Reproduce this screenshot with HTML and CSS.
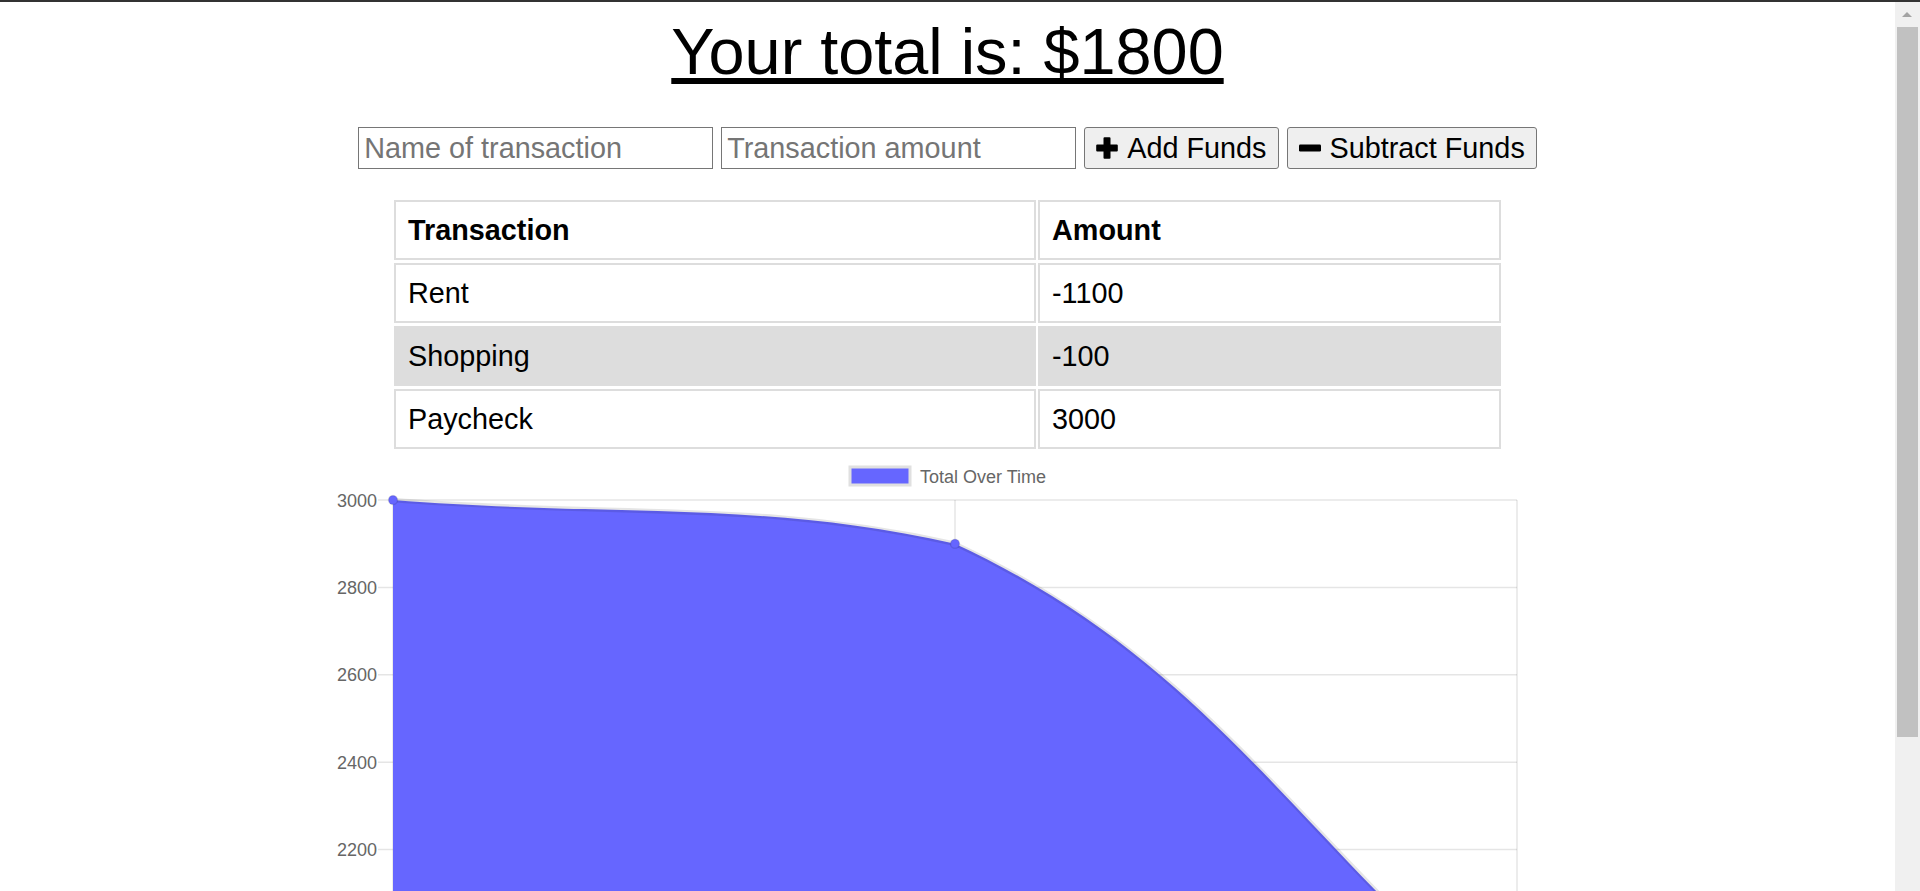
FILE: index.html
```html
<!DOCTYPE html>
<html lang="en">
<head>
<meta charset="utf-8">
<title>Budget Tracker</title>
<link rel="stylesheet" href="styles.css">
</head>
<body>
<div class="window-edge"></div>
<main class="page">
  <h1 class="total">Your total is: $1800</h1>

  <form class="entry">
    <input class="field" type="text" placeholder="Name of transaction">
    <input class="field" type="text" placeholder="Transaction amount">
    <button type="button" class="btn">
      <svg class="btn-icon" viewBox="0 0 22 22" aria-hidden="true"><path d="M7.5 1.2a1 1 0 0 1 1-1h5a1 1 0 0 1 1 1v6.3h6.3a1 1 0 0 1 1 1v5a1 1 0 0 1-1 1h-6.3v6.3a1 1 0 0 1-1 1h-5a1 1 0 0 1-1-1v-6.3H1.2a1 1 0 0 1-1-1v-5a1 1 0 0 1 1-1h6.3z" fill="#000"/></svg>
      <span>Add Funds</span>
    </button>
    <button type="button" class="btn">
      <svg class="btn-icon" viewBox="0 0 22 22" aria-hidden="true"><rect x="0" y="7.5" width="22" height="7" rx="1.2" fill="#000"/></svg>
      <span>Subtract Funds</span>
    </button>
  </form>

  <table class="ledger">
    <colgroup><col class="c-name"><col class="c-amount"></colgroup>
    <thead>
      <tr><th>Transaction</th><th>Amount</th></tr>
    </thead>
    <tbody>
      <tr><td>Rent</td><td>-1100</td></tr>
      <tr class="alt"><td>Shopping</td><td>-100</td></tr>
      <tr><td>Paycheck</td><td>3000</td></tr>
    </tbody>
  </table>

  <svg class="chart" viewBox="327 452 1241 439" width="1241" height="439" role="img" aria-label="Total Over Time chart">
    <g class="grid">
      <line x1="378" y1="500" x2="1517" y2="500"/>
      <line x1="378" y1="587.4" x2="1517" y2="587.4"/>
      <line x1="378" y1="674.8" x2="1517" y2="674.8"/>
      <line x1="378" y1="762.2" x2="1517" y2="762.2"/>
      <line x1="378" y1="849.6" x2="1517" y2="849.6"/>
      <line x1="378" y1="937" x2="1517" y2="937"/>
      <line x1="393" y1="500" x2="393" y2="1040"/>
      <line x1="955" y1="500" x2="955" y2="1040"/>
      <line x1="1517" y1="500" x2="1517" y2="1040"/>
    </g>
    <g class="ticks">
      <text x="377" y="506.5">3000</text>
      <text x="377" y="593.9">2800</text>
      <text x="377" y="681.3">2600</text>
      <text x="377" y="768.7">2400</text>
      <text x="377" y="856.1">2200</text>
    </g>
    <path class="area" d="M393 500 C617.8 517.5 760.5 500 955 543.7 C1210.1 662.7 1292.2 832.1 1517 1024.4 L393 1024.4 Z"/>
    <path class="line" d="M393 500 C617.8 517.5 760.5 500 955 543.7 C1210.1 662.7 1292.2 832.1 1517 1024.4"/>
    <circle class="pt" cx="393" cy="500" r="4.5"/>
    <circle class="pt" cx="955" cy="543.7" r="4.5"/>
    <g class="legend">
      <rect x="850" y="467" width="60" height="18"/>
      <text x="920" y="482.5">Total Over Time</text>
    </g>
  </svg>
</main>

<div class="scrollbar" aria-hidden="true">
  <span class="scroll-arrow"></span>
  <span class="scroll-thumb"></span>
</div>
</body>
</html>
```

FILE: styles.css
```css
html,
body {
  margin: 0;
  height: 100%;
  overflow: hidden;
  background: #fff;
}

body {
  font-family: "Liberation Sans", Arial, sans-serif;
  color: #000;
}

.window-edge {
  height: 2px;
  background: #333;
}

.page {
  margin-right: 25px;
}

.total {
  margin: 13px 0 0;
  font-size: 64.8px;
  line-height: 74px;
  font-weight: normal;
  text-align: center;
  text-decoration: underline;
}

.entry {
  display: flex;
  justify-content: center;
  gap: 8px;
  margin: 38px 0 0;
}

.field {
  box-sizing: border-box;
  width: 355px;
  height: 42px;
  margin: 0;
  padding: 0 5px;
  border: 1px solid #767676;
  border-radius: 0;
  background: #fff;
  color: #000;
  font: 28.8px "Liberation Sans", Arial, sans-serif;
}

.field::placeholder {
  color: #757575;
}

.btn {
  box-sizing: border-box;
  height: 42px;
  margin: 0;
  padding: 0 11px;
  display: inline-flex;
  align-items: center;
  gap: 9px;
  border: 1px solid #767676;
  border-radius: 3px;
  background: #efefef;
  color: #000;
  font: 28.8px "Liberation Sans", Arial, sans-serif;
}

.btn-icon {
  width: 22px;
  height: 22px;
  flex: none;
}

.ledger {
  margin: 28px auto 0;
  width: 1111px;
  table-layout: fixed;
  border-collapse: separate;
  border-spacing: 2px 3px;
  font-size: 28.8px;
}

.c-name {
  width: 642px;
}

.ledger th,
.ledger td {
  padding: 0 12px;
  border: 2px solid #ddd;
  line-height: 56px;
  text-align: left;
}

.ledger th {
  font-weight: bold;
}

.ledger .alt td {
  background: #ddd;
}

.chart {
  display: block;
  margin: 0 auto;
  overflow: hidden;
  font-family: "Liberation Sans", Arial, sans-serif;
}

.grid line {
  stroke: rgba(0, 0, 0, 0.1);
  stroke-width: 1.5;
}

.ticks text {
  font-size: 18px;
  fill: #666;
  text-anchor: end;
}

.area {
  fill: #6666ff;
}

.line {
  fill: none;
  stroke: rgba(0, 0, 0, 0.1);
  stroke-width: 4.5;
}

.pt {
  fill: #6666ff;
  stroke: rgba(0, 0, 0, 0.1);
  stroke-width: 1.5;
}

.legend rect {
  fill: #6666ff;
  stroke: #e0e0e0;
  stroke-width: 3;
}

.legend text {
  font-size: 18px;
  fill: #666;
}

.scrollbar {
  position: fixed;
  top: 2px;
  right: 0;
  bottom: 0;
  width: 25px;
  background: #f0f0f0;
}

.scroll-arrow {
  position: absolute;
  top: 10px;
  left: 7px;
  width: 0;
  height: 0;
  border-left: 5.5px solid transparent;
  border-right: 5.5px solid transparent;
  border-bottom: 5px solid #a3a3a3;
}

.scroll-thumb {
  position: absolute;
  top: 25px;
  left: 2px;
  width: 21px;
  height: 710px;
  background: #c1c1c1;
}
```
